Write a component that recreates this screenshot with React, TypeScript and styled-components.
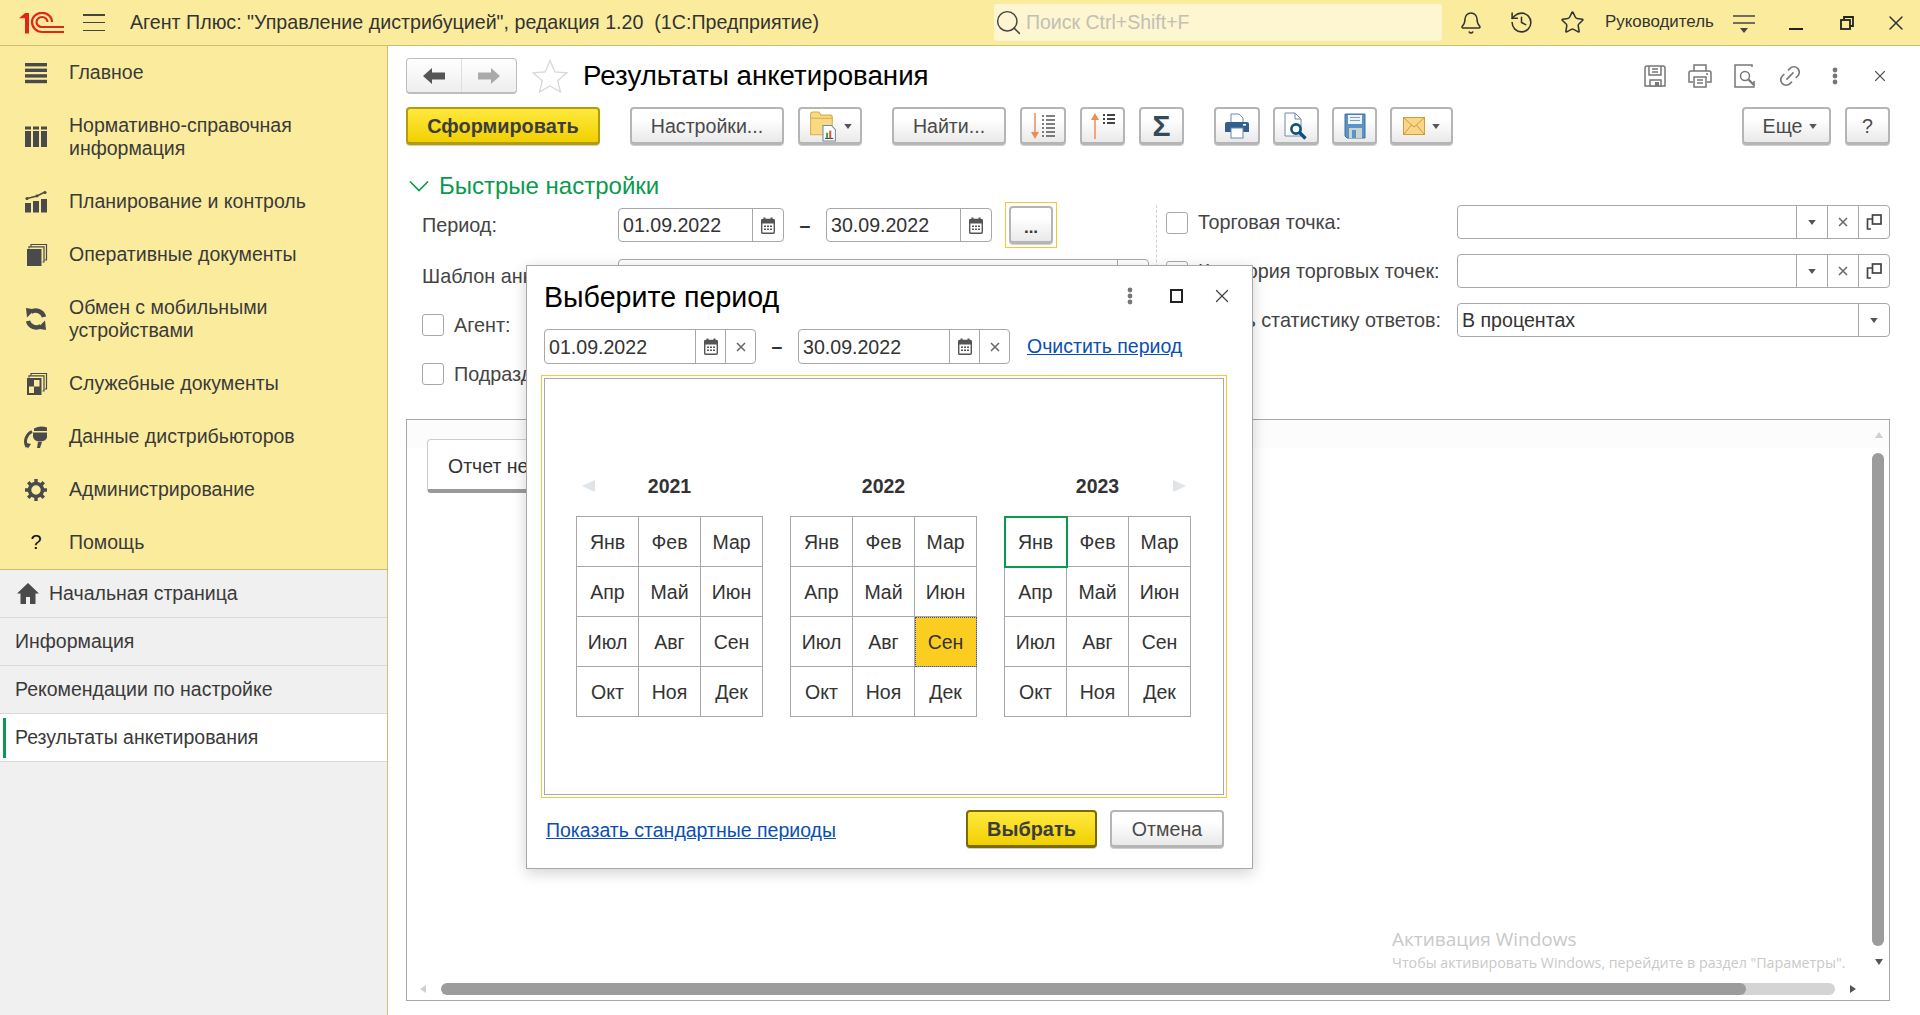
import React from "react";
import styled, { createGlobalStyle } from "styled-components";
import { Bell, History, Star, Search, Link2, X } from "lucide-react";

const GlobalStyle = createGlobalStyle`
  html, body {
    margin: 0;
    padding: 0;
    overflow: hidden;
    background: #fff;
  }
  body {
    font-family: "Liberation Sans", Arial, sans-serif;
    font-size: 19.5px;
    color: #333;
  }
  * { box-sizing: border-box; }
`;

const Shell = styled.div`
  position: relative;
  width: 1920px;
  height: 1015px;
  display: flex;
  flex-direction: column;
  overflow: hidden;
`;

/* top bar */
const TopBar = styled.header`
  height: 46px;
  flex: none;
  display: flex;
  align-items: center;
  background: #fbec9d;
  border-bottom: 1px solid #cdbf76;
`;
const LogoBox = styled.div`
  margin-left: 19px;
  width: 45px;
  height: 22px;
  display: flex;
`;
const Burger = styled.div`
  margin-left: 19px;
  width: 22px;
  height: 17px;
  display: flex;
  flex-direction: column;
  justify-content: space-between;
  span {
    height: 1.5px;
    background: #444;
  }
`;
const AppTitle = styled.div`
  margin-left: 25px;
  flex: 1;
  white-space: pre;
  color: #333;
  font-size: 19.65px;
`;
const SearchBox = styled.div`
  width: 448px;
  height: 37px;
  flex: none;
  display: flex;
  align-items: center;
  gap: 3px;
  border-radius: 3px;
  background: #fdf6d1;
  color: #c2c0b4;
  font-size: 19.5px;
`;
const TopActions = styled.div`
  width: 478px;
  flex: none;
  display: flex;
  align-items: center;
  padding-left: 3px;
  color: #333;
`;
const TopIcon = styled.div<{ $w?: number }>`
  width: ${(p) => p.$w ?? 51}px;
  flex: none;
  display: flex;
  justify-content: center;
  align-items: center;
`;
const UserName = styled.div`
  width: 107px;
  margin: 0 3px 0 7px;
  flex: none;
  font-size: 16.9px;
  white-space: nowrap;
  position: relative;
  top: -1px;
`;

/* body */
const Body = styled.div`
  flex: 1;
  display: flex;
  min-height: 0;
`;
const Sidebar = styled.aside`
  width: 388px;
  flex: none;
  display: flex;
  flex-direction: column;
  background: #f0f0f0;
  border-right: 1px solid #cdbf76;
`;
const NavList = styled.nav`
  background: #fbec9d;
  border-bottom: 1px solid #c9bb6f;
`;
const NavItem = styled.div`
  display: flex;
  align-items: center;
  padding: 15px 0;
  line-height: 23px;
  color: #3a3a3a;
`;
const NavIcon = styled.div`
  width: 26px;
  height: 23px;
  margin: 0 20px 0 23px;
  flex: none;
  display: flex;
  justify-content: center;
  align-items: center;
  color: #4a4a4a;
`;
const HelpMark = styled.span`
  color: #111;
  font-size: 20px;
`;
const Tab = styled.div<{ $active?: boolean; $home?: boolean }>`
  position: relative;
  height: 48px;
  display: flex;
  align-items: center;
  gap: 10px;
  padding-left: ${(p) => (p.$home ? 17 : 15)}px;
  color: #3a3a3a;
  background: ${(p) => (p.$active ? "#fff" : "transparent")};
  border-bottom: 1.5px solid #d9d9d9;
  ${(p) =>
    p.$active &&
    `&::before {
      content: "";
      position: absolute;
      left: 3px;
      top: 4px;
      bottom: 3px;
      width: 3px;
      background: #0a9a4e;
    }`}
`;

const Main = styled.main`
  flex: 1;
  min-width: 0;
  display: flex;
  flex-direction: column;
  padding: 12px 30px 14px 18px;
  background: #fff;
`;
const TitleRow = styled.div`
  height: 36px;
  flex: none;
  display: flex;
  align-items: center;
`;
const NavGroup = styled.div`
  width: 111px;
  height: 36px;
  display: flex;
  border: 1.5px solid #bdbdbd;
  border-bottom-width: 2.5px;
  border-radius: 4px;
  background: linear-gradient(#fff, #eee);
`;
const NavHalf = styled.div<{ $sep?: boolean }>`
  flex: 1;
  display: flex;
  justify-content: center;
  align-items: center;
  border-right: ${(p) => (p.$sep ? "1px solid #ddd" : "none")};
`;
const FavStar = styled.div`
  margin: 0 15px 0 15px;
  display: flex;
`;
const PageTitle = styled.h1<{ $size?: number }>`
  margin: 0;
  font-size: ${(p) => p.$size ?? 27.7}px;
  font-weight: 400;
  color: #000;
  white-space: nowrap;
`;
const TitleTools = styled.div`
  margin: 0 -12px 0 auto;
  display: flex;
`;
const TitleTool = styled.div`
  width: 45px;
  height: 36px;
  display: flex;
  justify-content: center;
  align-items: center;
  color: #777;
`;

/* buttons */
const Button = styled.button<{ $w: number; $tone?: "gold" | "dark"; $pad?: number }>`
  width: ${(p) => p.$w}px;
  height: 38px;
  flex: none;
  padding: 1px 0 0 ${(p) => p.$pad ?? 0}px;
  display: inline-flex;
  align-items: center;
  justify-content: center;
  gap: 7px;
  font: 400 19.6px "Liberation Sans", Arial, sans-serif;
  color: #4a4a4a;
  border-radius: 4px;
  border: 2px solid #b5b5b5;
  border-bottom-width: 3px;
  background: linear-gradient(#fff 30%, #e9e9e9);
  box-shadow: 0 1px 0 #d0d0d0;
  ${(p) =>
    p.$tone &&
    `
    font-weight: 700;
    font-size: 19.9px;
    color: #3d3d3d;
    background: linear-gradient(#ffe93f, #f1d000);
    border-color: ${p.$tone === "gold" ? "#b39c0a" : "#7a6a05"};
  `}
`;
const Toolbar = styled.div`
  margin-top: 13px;
  flex: none;
  display: flex;
  gap: 30px;
`;
const ToolGroup = styled.div<{ $gap?: number; $end?: boolean }>`
  display: flex;
  gap: ${(p) => p.$gap ?? 14}px;
  margin-left: ${(p) => (p.$end ? "auto" : "0")};
`;
const SigmaMark = styled.span`
  font-size: 30px;
  line-height: 1;
  font-weight: 700;
  color: #35485c;
`;

const QuickHead = styled.div`
  margin: 29px 0 7px 3px;
  height: 24px;
  flex: none;
  display: flex;
  align-items: center;
  gap: 10px;
  font-size: 24px;
  color: #0a9a4e;
`;
const FormGrid = styled.div`
  flex: none;
  display: flex;
  padding-left: 16px;
`;
const LeftColumn = styled.div`
  width: 734px;
  padding-top: 3px;
  flex: none;
  display: flex;
  flex-direction: column;
  gap: 15px;
`;
const RightColumn = styled.div`
  flex: 1;
  min-width: 0;
  padding-left: 9px;
  display: flex;
  flex-direction: column;
  gap: 15px;
  border-left: 1px dashed #cfcfcf;
`;
const FormRow = styled.div<{ $gap?: number }>`
  height: 34px;
  display: flex;
  align-items: center;
  margin-top: ${(p) => p.$gap ?? 0}px;
`;
const FieldLabel = styled.label<{ $w?: number }>`
  width: ${(p) => (p.$w ? `${p.$w}px` : "auto")};
  flex: none;
  padding-top: 1px;
  color: #444;
  font-size: 19.8px;
  white-space: nowrap;
`;
const Check = styled.span`
  width: 22px;
  height: 22px;
  flex: none;
  margin-right: 10px;
  border: 1px solid #a8a8a8;
  border-radius: 3px;
  background: #fff;
`;
const Field = styled.div<{ $w: number; $h?: number }>`
  width: ${(p) => p.$w}px;
  height: ${(p) => p.$h ?? 34}px;
  flex: none;
  display: flex;
  border: 1px solid #a8a8a8;
  border-radius: 4px;
  background: #fff;
  color: #333;
`;
const FieldValue = styled.div`
  flex: 1;
  min-width: 0;
  display: flex;
  align-items: center;
  padding: 1px 0 0 4px;
  font-size: 19.6px;
  white-space: nowrap;
`;
const FieldBtn = styled.div<{ $w?: number }>`
  width: ${(p) => p.$w ?? 31}px;
  flex: none;
  display: flex;
  justify-content: center;
  align-items: center;
  border-left: 1px solid #a8a8a8;
  color: #666;
`;
const Dash = styled.span<{ $w: number }>`
  width: ${(p) => p.$w}px;
  flex: none;
  text-align: center;
  color: #333;
  font-weight: 700;
`;
const FocusFrame = styled.div`
  width: 52px;
  height: 46px;
  margin-left: 13px;
  padding: 3px;
  flex: none;
  border: 1px solid #f7c92a;
  display: flex;
`;
const MoreButton = styled(Button)`
  width: 100%;
  height: 100%;
  align-items: flex-end;
  padding-bottom: 6px;
  color: #333;
  font-weight: 700;
  font-size: 17px;
  line-height: 14px;
`;
const RightLabel = styled(FieldLabel)<{ $toEnd?: boolean }>`
  flex: 1;
  min-width: 0;
  display: flex;
  align-items: center;
  justify-content: ${(p) => (p.$toEnd ? "flex-end" : "flex-start")};
`;
const RightEnd = styled.span`
  flex: none;
  padding-right: 16px;
`;

/* report area */
const Report = styled.section`
  position: relative;
  flex: 1;
  min-height: 0;
  margin-top: 28px;
  border: 1px solid #a8a8a8;
  background: linear-gradient(#fcfcfc 28px, #fff 28px);
  overflow: hidden;
`;
const NoteTab = styled.div`
  width: 410px;
  height: 54px;
  margin: 19px 0 0 20px;
  display: flex;
  align-items: center;
  padding: 3px 0 0 20px;
  background: #fff;
  border: 1px solid #ccc;
  border-bottom: 4px solid #999;
  border-radius: 4px;
  color: #333;
`;
const ScrollThumb = styled.div<{ $vertical?: boolean }>`
  position: absolute;
  background: #9c9c9c;
  border-radius: 6px;
  ${(p) =>
    p.$vertical
      ? "right: 5px; top: 33px; bottom: 54px; width: 12px;"
      : "left: 34px; bottom: 5px; width: 1305px; height: 12px;"}
`;
const ScrollRail = styled.div`
  position: absolute;
  left: 1300px;
  width: 128px;
  bottom: 5px;
  height: 12px;
  border-radius: 6px;
  background: #d4d4d4;
`;
const ScrollArrow = styled.div<{ $dir: "up" | "down" | "left" | "right"; $pale?: boolean }>`
  position: absolute;
  width: 0;
  height: 0;
  ${(p) => {
    const c = p.$pale ? "#cfcfcf" : "#555";
    if (p.$dir === "up")
      return `right: 6px; top: 12px; border: 4px solid transparent; border-top: 0; border-bottom: 6px solid ${c};`;
    if (p.$dir === "down")
      return `right: 6px; bottom: 35px; border: 4px solid transparent; border-bottom: 0; border-top: 6px solid ${c};`;
    if (p.$dir === "left")
      return `left: 13px; bottom: 7px; border: 4px solid transparent; border-left: 0; border-right: 6px solid ${c};`;
    return `right: 33px; bottom: 7px; border: 4px solid transparent; border-right: 0; border-left: 6px solid ${c};`;
  }}
`;
const Watermark = styled.div`
  position: absolute;
  left: 1392px;
  top: 925px;
  font-family: "Open Sans", sans-serif;
  color: #c9c9c9;
  white-space: nowrap;
  pointer-events: none;
`;
const WatermarkBig = styled.div`
  font-size: 19px;
  line-height: 28px;
`;
const WatermarkSmall = styled.div`
  font-size: 14.25px;
  line-height: 18px;
  margin-top: 1px;
`;

/* period dialog */
const Dialog = styled.div`
  position: absolute;
  left: 526px;
  top: 265px;
  width: 727px;
  height: 604px;
  display: flex;
  flex-direction: column;
  background: #fff;
  border: 1px solid #a8a8a8;
  box-shadow: 0 4px 14px rgba(0, 0, 0, 0.18);
`;
const DialogHead = styled.div`
  height: 63px;
  flex: none;
  display: flex;
  align-items: center;
  padding-left: 17px;
`;
const DialogTools = styled.div`
  margin: -3px 7px 0 auto;
  display: flex;
  color: #444;
`;
const DialogTool = styled.div`
  width: 46px;
  display: flex;
  justify-content: center;
  align-items: center;
`;
const PeriodRow = styled.div`
  height: 35px;
  flex: none;
  display: flex;
  align-items: center;
  padding-left: 17px;
`;
const PeriodLink = styled.a`
  margin-left: 17px;
  color: #0b4fb3;
  text-decoration: underline;
  white-space: nowrap;
`;
const CalendarFrame = styled.div`
  width: 686px;
  height: 423px;
  margin: 11px 0 0 14px;
  padding: 2px;
  flex: none;
  display: flex;
  border: 1px solid #f7cb30;
`;
const CalendarBody = styled.div`
  flex: 1;
  display: flex;
  gap: 27px;
  padding: 92px 0 0 31px;
  border: 1px solid #a8a8a8;
`;
const YearColumn = styled.div`
  width: 187px;
  flex: none;
`;
const YearHead = styled.div`
  height: 30px;
  margin-bottom: 15px;
  display: grid;
  grid-template-columns: 24px 1fr 24px;
  align-items: center;
  justify-items: center;
  font-weight: 700;
  color: #333;
`;
const YearArrow = styled.span<{ $right?: boolean }>`
  display: block;
  width: 0;
  height: 0;
  border: 6.5px solid transparent;
  ${(p) =>
    p.$right
      ? "border-right: 0; border-left: 13px solid #dfe4e8;"
      : "border-left: 0; border-right: 13px solid #dfe4e8;"}
`;
const MonthGrid = styled.div`
  display: grid;
  grid-template-columns: repeat(3, 62px);
  grid-auto-rows: 50px;
  border-left: 1px solid #a8a8a8;
  border-top: 1px solid #a8a8a8;
`;
const MonthCell = styled.div<{ $state?: "today" | "picked" }>`
  display: flex;
  justify-content: center;
  align-items: center;
  padding-top: 1px;
  color: #333;
  border-right: 1px solid #a8a8a8;
  border-bottom: 1px solid #a8a8a8;
  ${(p) =>
    p.$state === "today" &&
    "outline: 2px solid #0a9a4e; outline-offset: -1px; position: relative;"}
  ${(p) =>
    p.$state === "picked" &&
    "background: #fbcd20; outline: 1px dotted #3a55a8; outline-offset: -1px;"}
`;
const DialogFooter = styled.div`
  margin-top: 12px;
  display: flex;
  align-items: center;
  gap: 13px;
  padding: 0 28px 0 19px;
`;
const FooterLink = styled(PeriodLink)`
  margin: 2px auto 0 0;
`;

/* drawings */
const Logo = () => (
  <svg width="45" height="22" viewBox="0 0 45 22" fill="none" stroke="#e1251b" strokeWidth="2.2">
    <path d="M0 6.2L6.2 1H10V21.5H6V6.2H0Z" fill="#e1251b" stroke="none" />
    <path d="M33 10A10 9.2 0 0 0 13 10A10 10 0 0 0 23 20H45" />
    <path d="M28.5 10A5.5 5 0 0 0 17.5 10A5.2 5 0 0 0 23 15H45" />
  </svg>
);
const RoleMenu = () => (
  <svg width="22" height="22" viewBox="0 0 22 22">
    <path d="M0 4H22M0 11H22" stroke="#444" strokeWidth="1.5" />
    <path d="M7 16H15L11 21Z" fill="#444" />
  </svg>
);
const Minimize = () => (
  <svg width="16" height="20" viewBox="0 0 16 20">
    <path d="M1 16H15" stroke="#222" strokeWidth="2" />
  </svg>
);
const Restore = () => (
  <svg width="16" height="16" viewBox="0 0 16 16" fill="none" stroke="#222" strokeWidth="1.8">
    <rect x="2" y="5" width="9" height="9" />
    <path d="M5 5V2H14V11H11" />
  </svg>
);
const Bars = () => (
  <svg width="24" height="24" viewBox="0 0 24 24" fill="currentColor">
    <rect x="1" y="2" width="22" height="3.4" />
    <rect x="1" y="7.6" width="22" height="3.4" />
    <rect x="1" y="13.2" width="22" height="3.4" />
    <rect x="1" y="18.8" width="22" height="3.4" />
  </svg>
);
const Columns = () => (
  <svg width="24" height="24" viewBox="0 0 24 24" fill="currentColor">
    <rect x="1" y="1.5" width="6" height="3" />
    <rect x="9" y="1.5" width="6" height="3" />
    <rect x="17" y="1.5" width="6" height="3" />
    <rect x="1" y="6" width="6" height="16" />
    <rect x="9" y="6" width="6" height="16" />
    <rect x="17" y="6" width="6" height="16" />
  </svg>
);
const Chart = () => (
  <svg width="24" height="24" viewBox="0 0 24 24" fill="currentColor">
    <rect x="1" y="13" width="6" height="9.5" />
    <rect x="9" y="11" width="6" height="11.5" />
    <rect x="17" y="9" width="6" height="13.5" />
    <path d="M3 8.5L13 6L21 2" stroke="currentColor" strokeWidth="1.5" fill="none" />
    <circle cx="3" cy="8.5" r="1.6" />
    <circle cx="13" cy="6" r="1.4" />
    <circle cx="21" cy="2.5" r="1.6" />
  </svg>
);
const DocStack = ({ check }: { check?: boolean }) => (
  <svg width="24" height="24" viewBox="0 0 24 24">
    <path d="M7 3.5V1.5H22.5V17H20.5" fill="none" stroke="currentColor" strokeWidth="1.2" />
    <path d="M5 5.5V3.8H20V19H18.5" fill="none" stroke="currentColor" strokeWidth="1.2" />
    <rect x="3" y="6" width="14.5" height="17" fill="currentColor" />
    {check && (
      <>
        <rect x="10" y="8" width="5.5" height="6.5" fill="#fbec9d" />
        <rect x="5" y="14.5" width="5" height="6.5" fill="#fbec9d" />
      </>
    )}
  </svg>
);
const Sync = () => (
  <svg width="24" height="24" viewBox="0 0 24 24" fill="none" stroke="currentColor" strokeWidth="4.4">
    <path d="M20 10A8.5 8.5 0 0 0 7 5" />
    <path d="M4 14A8.5 8.5 0 0 0 17 19" />
    <path d="M2 1L11 2.5L3 10.5Z" fill="currentColor" stroke="none" />
    <path d="M22 23L13 21.5L21 13.5Z" fill="currentColor" stroke="none" />
  </svg>
);
const Distributor = () => (
  <svg width="24" height="24" viewBox="0 0 24 24" fill="currentColor">
    <path d="M10 3.5Q16 0 23 2.5V6H10Z" />
    <path d="M9 7.5H23V12.5Q22 16 17 16.5H14Q10 15.5 9 12Z" />
    <path d="M14 17H18L16 23H13Z" />
    <path d="M8 6.5A11 11 0 0 0 3 22" fill="none" stroke="currentColor" strokeWidth="3" />
    <path d="M0.5 17.5L7 19L4 23.5Z" />
  </svg>
);
const Gear = () => (
  <svg width="24" height="24" viewBox="0 0 24 24" fill="none" stroke="currentColor">
    <circle cx="12" cy="12" r="6.5" strokeWidth="3.6" />
    <path
      d="M12 1V5M12 19V23M1 12H5M19 12H23M4.2 4.2L7 7M17 17L19.8 19.8M19.8 4.2L17 7M7 17L4.2 19.8"
      strokeWidth="3.4"
    />
  </svg>
);
const Home = () => (
  <svg width="22" height="21" viewBox="0 0 22 21" fill="#4a4a4a">
    <path d="M11 0L22 10.5H18.5V21H13V14H9V21H3.5V10.5H0Z" />
  </svg>
);
const ArrowIcon = ({ back, color }: { back?: boolean; color: string }) => (
  <svg width="22" height="16" viewBox="0 0 22 16" fill={color}>
    <path d={back ? "M0 8L9 0V4.5H22V11.5H9V16Z" : "M22 8L13 0V4.5H0V11.5H13V16Z"} />
  </svg>
);
const Caret = ({ color = "#555" }: { color?: string }) => (
  <svg width="8" height="5" viewBox="0 0 9 6" fill={color}>
    <path d="M0 0H9L4.5 6Z" />
  </svg>
);
const Chevron = () => (
  <svg width="20" height="12" viewBox="0 0 20 12" fill="none" stroke="#0a9a4e" strokeWidth="1.7">
    <path d="M1 1.5L10 10.5L19 1.5" />
  </svg>
);
const Cal = () => (
  <svg width="14" height="17" viewBox="0 0 14 17">
    <rect x="0.7" y="2.5" width="12.6" height="13.8" rx="1" fill="none" stroke="#555" strokeWidth="1.4" />
    <rect x="0.7" y="2.5" width="12.6" height="4" fill="#555" />
    <path d="M3.5 0.5V3.5M10.5 0.5V3.5" stroke="#555" strokeWidth="2" />
    <path d="M3 8.5h2v1.6H3zM6 8.5h2v1.6H6zM9 8.5h2v1.6H9zM3 11.5h2v1.6H3zM6 11.5h2v1.6H6zM9 11.5h2v1.6H9z" fill="#555" />
  </svg>
);
const ClearX = () => (
  <svg width="10" height="10" viewBox="0 0 10 10" stroke="#666" strokeWidth="1.5">
    <path d="M1 1L9 9M9 1L1 9" />
  </svg>
);
const OpenCopy = () => (
  <svg width="16" height="16" viewBox="0 0 16 16" fill="none" stroke="#444" strokeWidth="1.7">
    <rect x="6.5" y="1" width="8.5" height="9" />
    <path d="M6.5 5H1.5V15H5" />
  </svg>
);
const FolderReport = () => (
  <svg width="28" height="31" viewBox="0 0 26 30">
    <path d="M1 3.5Q1 1 3 1H9L11 4H20Q22 4 22 6V23H1Z" fill="#f7da83" stroke="#d9ad4a" />
    <rect x="1" y="6.5" width="21" height="1" fill="#d9ad4a" />
    <path d="M13 14H21L25 18V29H13Z" fill="#fff" stroke="#6f8aa3" />
    <rect x="16" y="21" width="2" height="5" fill="#3aa655" />
    <rect x="19" y="19" width="2" height="7" fill="#e0533d" />
    <rect x="15" y="26" width="8" height="1" fill="#3a3a3a" />
  </svg>
);
const SortList = ({ up }: { up?: boolean }) => (
  <svg width="24" height="26" viewBox="0 0 24 26">
    <path
      d={up ? "M4 26V5" : "M4 0V21"}
      stroke="#f08b55"
      strokeWidth="1.5"
    />
    <path d={up ? "M0 7L4 0L8 7Z" : "M0 19L4 26L8 19Z"} fill="#f08b55" />
    {up ? (
      <path d="M12 2H14M16 2H24M12 6H14M16 6H24M12 10H14M16 10H24" stroke="#444" strokeWidth="2" />
    ) : (
      <path
        d="M11 3H13M15 3H24M11 7H13M15 7H24M11 11H13M15 11H24M11 15H13M15 15H24M11 19H13M15 19H24M11 23H13M15 23H24"
        stroke="#555"
        strokeWidth="1.6"
      />
    )}
  </svg>
);
const PrintColor = () => (
  <svg width="26" height="26" viewBox="0 0 26 26">
    <path d="M7 1H15L19 5V10H7Z" fill="#fff" stroke="#6c8aa6" />
    <path d="M3 9H23Q25 9 25 11V19H1V11Q1 9 3 9Z" fill="#335f8c" />
    <rect x="19" y="11" width="3" height="1.6" fill="#fff" />
    <rect x="7" y="15" width="12" height="10" fill="#fff" stroke="#6c8aa6" />
  </svg>
);
const PreviewColor = () => (
  <svg width="24" height="28" viewBox="0 0 24 28">
    <path d="M1 1H11L17 7V24H1Z" fill="#fff" stroke="#6c8aa6" />
    <path d="M11 1V7H17" fill="none" stroke="#6c8aa6" />
    <circle cx="12" cy="17" r="4.6" fill="#fff" stroke="#0e4f7e" strokeWidth="2.6" />
    <path d="M15.5 20.5L21.5 26.5" stroke="#0e4f7e" strokeWidth="3.4" />
  </svg>
);
const SaveColor = () => (
  <svg width="22" height="26" viewBox="0 0 22 26">
    <path d="M1 1H21V25H3L1 23Z" fill="#5b93c7" stroke="#416f9c" />
    <rect x="4" y="2" width="14" height="9" fill="#eef3f7" />
    <path d="M6 4.5H16M6 7.5H16" stroke="#7aa0c2" />
    <rect x="5" y="15" width="13" height="10" fill="#c9d3cf" />
    <rect x="8" y="17" width="4" height="8" fill="#5b93c7" />
  </svg>
);
const Mail = () => (
  <svg width="22" height="18" viewBox="0 0 22 18">
    <rect x="0.5" y="0.5" width="21" height="17" fill="#f9d48b" stroke="#d69a37" />
    <path d="M1 1L11 10L21 1M1 17L8.5 8M21 17L13.5 8" fill="none" stroke="#d69a37" />
  </svg>
);
const TitleSave = () => (
  <svg width="22" height="22" viewBox="0 0 22 22" fill="none" stroke="#777" strokeWidth="1.5">
    <path d="M3 1H19Q21 1 21 3V21H1V3Q1 1 3 1Z" />
    <path d="M5 1V10H17V1M8 4H14M8 7H14" />
    <rect x="6" y="15" width="11" height="6" fill="#fff" />
    <rect x="11" y="17" width="4" height="4" fill="#777" stroke="none" />
  </svg>
);
const TitlePrint = () => (
  <svg width="24" height="24" viewBox="0 0 24 24" fill="none" stroke="#777" strokeWidth="1.5">
    <path d="M6 7V1H18V7" />
    <path d="M5 18H1V9Q1 7 3 7H21Q23 7 23 9V18H19" />
    <rect x="6" y="13" width="12" height="10" />
    <path d="M9 16H15M9 19H15M18 10H20" />
  </svg>
);
const TitlePreview = () => (
  <svg width="22" height="24" viewBox="0 0 22 24" fill="none" stroke="#777" strokeWidth="1.5">
    <path d="M14 1H1V23H20V17M14 1L18 1V3" />
    <circle cx="11" cy="12" r="4.5" />
    <path d="M14.5 15.5L20 21" strokeWidth="2.2" />
  </svg>
);
const KebabIcon = ({ color = "#777" }: { color?: string }) => (
  <svg width="6" height="18" viewBox="0 0 6 18" fill={color}>
    <circle cx="3" cy="3" r="2.4" />
    <circle cx="3" cy="9" r="2.4" />
    <circle cx="3" cy="15" r="2.4" />
  </svg>
);
const FavOutline = () => (
  <svg width="36" height="34" viewBox="0 0 36 34" fill="#fff" stroke="#d8d8d8" strokeWidth="1.3">
    <path d="M18 1.5L22.8 12.8L35 13.8L25.7 21.8L28.5 33L18 27L7.5 33L10.3 21.8L1 13.8L13.2 12.8Z" />
  </svg>
);

const navItems: { icon: React.ReactNode; text: React.ReactNode }[] = [
  { icon: <Bars />, text: "Главное" },
  { icon: <Columns />, text: <>Нормативно-справочная<br />информация</> },
  { icon: <Chart />, text: "Планирование и контроль" },
  { icon: <DocStack />, text: "Оперативные документы" },
  { icon: <Sync />, text: <>Обмен с мобильными<br />устройствами</> },
  { icon: <DocStack check />, text: "Служебные документы" },
  { icon: <Distributor />, text: "Данные дистрибьюторов" },
  { icon: <Gear />, text: "Администрирование" },
  { icon: <HelpMark>?</HelpMark>, text: "Помощь" },
];

const months = ["Янв", "Фев", "Мар", "Апр", "Май", "Июн", "Июл", "Авг", "Сен", "Окт", "Ноя", "Дек"];

const years = [
  { year: 2021, arrow: "left" },
  { year: 2022, picked: "Сен" },
  { year: 2023, today: "Янв", arrow: "right" },
] as { year: number; arrow?: string; picked?: string; today?: string }[];

const RefField = () => (
  <Field $w={433}>
    <FieldValue />
    <FieldBtn><Caret /></FieldBtn>
    <FieldBtn><ClearX /></FieldBtn>
    <FieldBtn><OpenCopy /></FieldBtn>
  </Field>
);

const DateField = ({ value }: { value: string }) => (
  <Field $w={166}>
    <FieldValue>{value}</FieldValue>
    <FieldBtn><Cal /></FieldBtn>
  </Field>
);

const DialogDate = ({ value }: { value: string }) => (
  <Field $w={212} $h={35}>
    <FieldValue>{value}</FieldValue>
    <FieldBtn $w={30}><Cal /></FieldBtn>
    <FieldBtn $w={30}><ClearX /></FieldBtn>
  </Field>
);

export default function App() {
  return (
    <Shell>
      <GlobalStyle />
      <TopBar>
        <LogoBox><Logo /></LogoBox>
        <Burger><span /><span /><span /></Burger>
        <AppTitle>Агент Плюс: "Управление дистрибуцией", редакция 1.20  (1С:Предприятие)</AppTitle>
        <SearchBox>
          <Search size={29} color="#444" strokeWidth={1.2} />
          Поиск Ctrl+Shift+F
        </SearchBox>
        <TopActions>
          <TopIcon><Bell size={24} strokeWidth={1.5} /></TopIcon>
          <TopIcon><History size={25} strokeWidth={1.5} /></TopIcon>
          <TopIcon><Star size={25} strokeWidth={1.5} /></TopIcon>
          <UserName>Руководитель</UserName>
          <TopIcon $w={58}><RoleMenu /></TopIcon>
          <TopIcon $w={46}><Minimize /></TopIcon>
          <TopIcon $w={55}><Restore /></TopIcon>
          <TopIcon $w={44}><X size={24} strokeWidth={1.5} /></TopIcon>
        </TopActions>
      </TopBar>
      <Body>
        <Sidebar>
          <NavList>
            {navItems.map((item, i) => (
              <NavItem key={i}>
                <NavIcon>{item.icon}</NavIcon>
                <div>{item.text}</div>
              </NavItem>
            ))}
          </NavList>
          <Tab $home><Home />Начальная страница</Tab>
          <Tab>Информация</Tab>
          <Tab>Рекомендации по настройке</Tab>
          <Tab $active>Результаты анкетирования</Tab>
        </Sidebar>
        <Main>
          <TitleRow>
            <NavGroup>
              <NavHalf $sep><ArrowIcon back color="#555" /></NavHalf>
              <NavHalf><ArrowIcon color="#aaa" /></NavHalf>
            </NavGroup>
            <FavStar><FavOutline /></FavStar>
            <PageTitle>Результаты анкетирования</PageTitle>
            <TitleTools>
              <TitleTool><TitleSave /></TitleTool>
              <TitleTool><TitlePrint /></TitleTool>
              <TitleTool><TitlePreview /></TitleTool>
              <TitleTool><Link2 size={26} strokeWidth={1.5} style={{ transform: "rotate(-45deg)" }} /></TitleTool>
              <TitleTool><KebabIcon /></TitleTool>
              <TitleTool><X size={18} strokeWidth={1.5} color="#555" /></TitleTool>
            </TitleTools>
          </TitleRow>
          <Toolbar>
            <Button $w={194} $tone="gold">Сформировать</Button>
            <ToolGroup>
              <Button $w={154}>Настройки...</Button>
              <Button $w={64}><FolderReport /><Caret /></Button>
            </ToolGroup>
            <ToolGroup>
              <Button $w={114}>Найти...</Button>
              <Button $w={46}><SortList /></Button>
              <Button $w={45}><SortList up /></Button>
              <Button $w={45}><SigmaMark>Σ</SigmaMark></Button>
            </ToolGroup>
            <ToolGroup $gap={13}>
              <Button $w={46}><PrintColor /></Button>
              <Button $w={46}><PreviewColor /></Button>
              <Button $w={45}><SaveColor /></Button>
              <Button $w={63}><Mail /><Caret /></Button>
            </ToolGroup>
            <ToolGroup $end>
              <Button $w={89} $pad={7}>Еще<Caret /></Button>
              <Button $w={45}>?</Button>
            </ToolGroup>
          </Toolbar>
          <QuickHead><Chevron />Быстрые настройки</QuickHead>
          <FormGrid>
            <LeftColumn>
              <FormRow>
                <FieldLabel $w={196}>Период:</FieldLabel>
                <DateField value="01.09.2022" />
                <Dash $w={42}>–</Dash>
                <DateField value="30.09.2022" />
                <FocusFrame><MoreButton $w={44}>...</MoreButton></FocusFrame>
              </FormRow>
              <FormRow $gap={2}>
                <FieldLabel $w={196}>Шаблон анкеты:</FieldLabel>
                <Field $w={531}>
                  <FieldValue />
                  <FieldBtn><Caret /></FieldBtn>
                </Field>
              </FormRow>
              <FormRow>
                <Check />
                <FieldLabel>Агент:</FieldLabel>
              </FormRow>
              <FormRow>
                <Check />
                <FieldLabel>Подразделение:</FieldLabel>
              </FormRow>
            </LeftColumn>
            <RightColumn>
              <FormRow>
                <RightLabel><Check />Торговая точка:</RightLabel>
                <RefField />
              </FormRow>
              <FormRow>
                <RightLabel><Check />Категория торговых точек:</RightLabel>
                <RefField />
              </FormRow>
              <FormRow>
                <RightLabel $toEnd><RightEnd>Выводить статистику ответов:</RightEnd></RightLabel>
                <Field $w={433}>
                  <FieldValue>В процентах</FieldValue>
                  <FieldBtn><Caret /></FieldBtn>
                </Field>
              </FormRow>
            </RightColumn>
          </FormGrid>
          <Report>
            <NoteTab>Отчет не сформирован.</NoteTab>
            <ScrollArrow $dir="up" $pale />
            <ScrollThumb $vertical />
            <ScrollArrow $dir="down" />
            <ScrollArrow $dir="left" $pale />
            <ScrollRail />
            <ScrollThumb />
            <ScrollArrow $dir="right" />
          </Report>
        </Main>
      </Body>
      <Watermark>
        <WatermarkBig>Активация Windows</WatermarkBig>
        <WatermarkSmall>Чтобы активировать Windows, перейдите в раздел "Параметры".</WatermarkSmall>
      </Watermark>
      <Dialog>
        <DialogHead>
          <PageTitle $size={28.6}>Выберите период</PageTitle>
          <DialogTools>
            <DialogTool><KebabIcon /></DialogTool>
            <DialogTool>
              <svg width="13" height="14" viewBox="0 0 13 14" fill="none" stroke="#222" strokeWidth="2">
                <rect x="1" y="1" width="11" height="12" />
              </svg>
            </DialogTool>
            <DialogTool><X size={22} strokeWidth={1.4} /></DialogTool>
          </DialogTools>
        </DialogHead>
        <PeriodRow>
          <DialogDate value="01.09.2022" />
          <Dash $w={42}>–</Dash>
          <DialogDate value="30.09.2022" />
          <PeriodLink>Очистить период</PeriodLink>
        </PeriodRow>
        <CalendarFrame>
          <CalendarBody>
            {years.map((y) => (
              <YearColumn key={y.year}>
                <YearHead>
                  <span>{y.arrow === "left" && <YearArrow />}</span>
                  {y.year}
                  <span>{y.arrow === "right" && <YearArrow $right />}</span>
                </YearHead>
                <MonthGrid>
                  {months.map((m) => (
                    <MonthCell
                      key={m}
                      $state={m === y.picked ? "picked" : m === y.today ? "today" : undefined}
                    >
                      {m}
                    </MonthCell>
                  ))}
                </MonthGrid>
              </YearColumn>
            ))}
          </CalendarBody>
        </CalendarFrame>
        <DialogFooter>
          <FooterLink>Показать стандартные периоды</FooterLink>
          <Button $w={131} $tone="dark">Выбрать</Button>
          <Button $w={114}>Отмена</Button>
        </DialogFooter>
      </Dialog>
    </Shell>
  );
}
